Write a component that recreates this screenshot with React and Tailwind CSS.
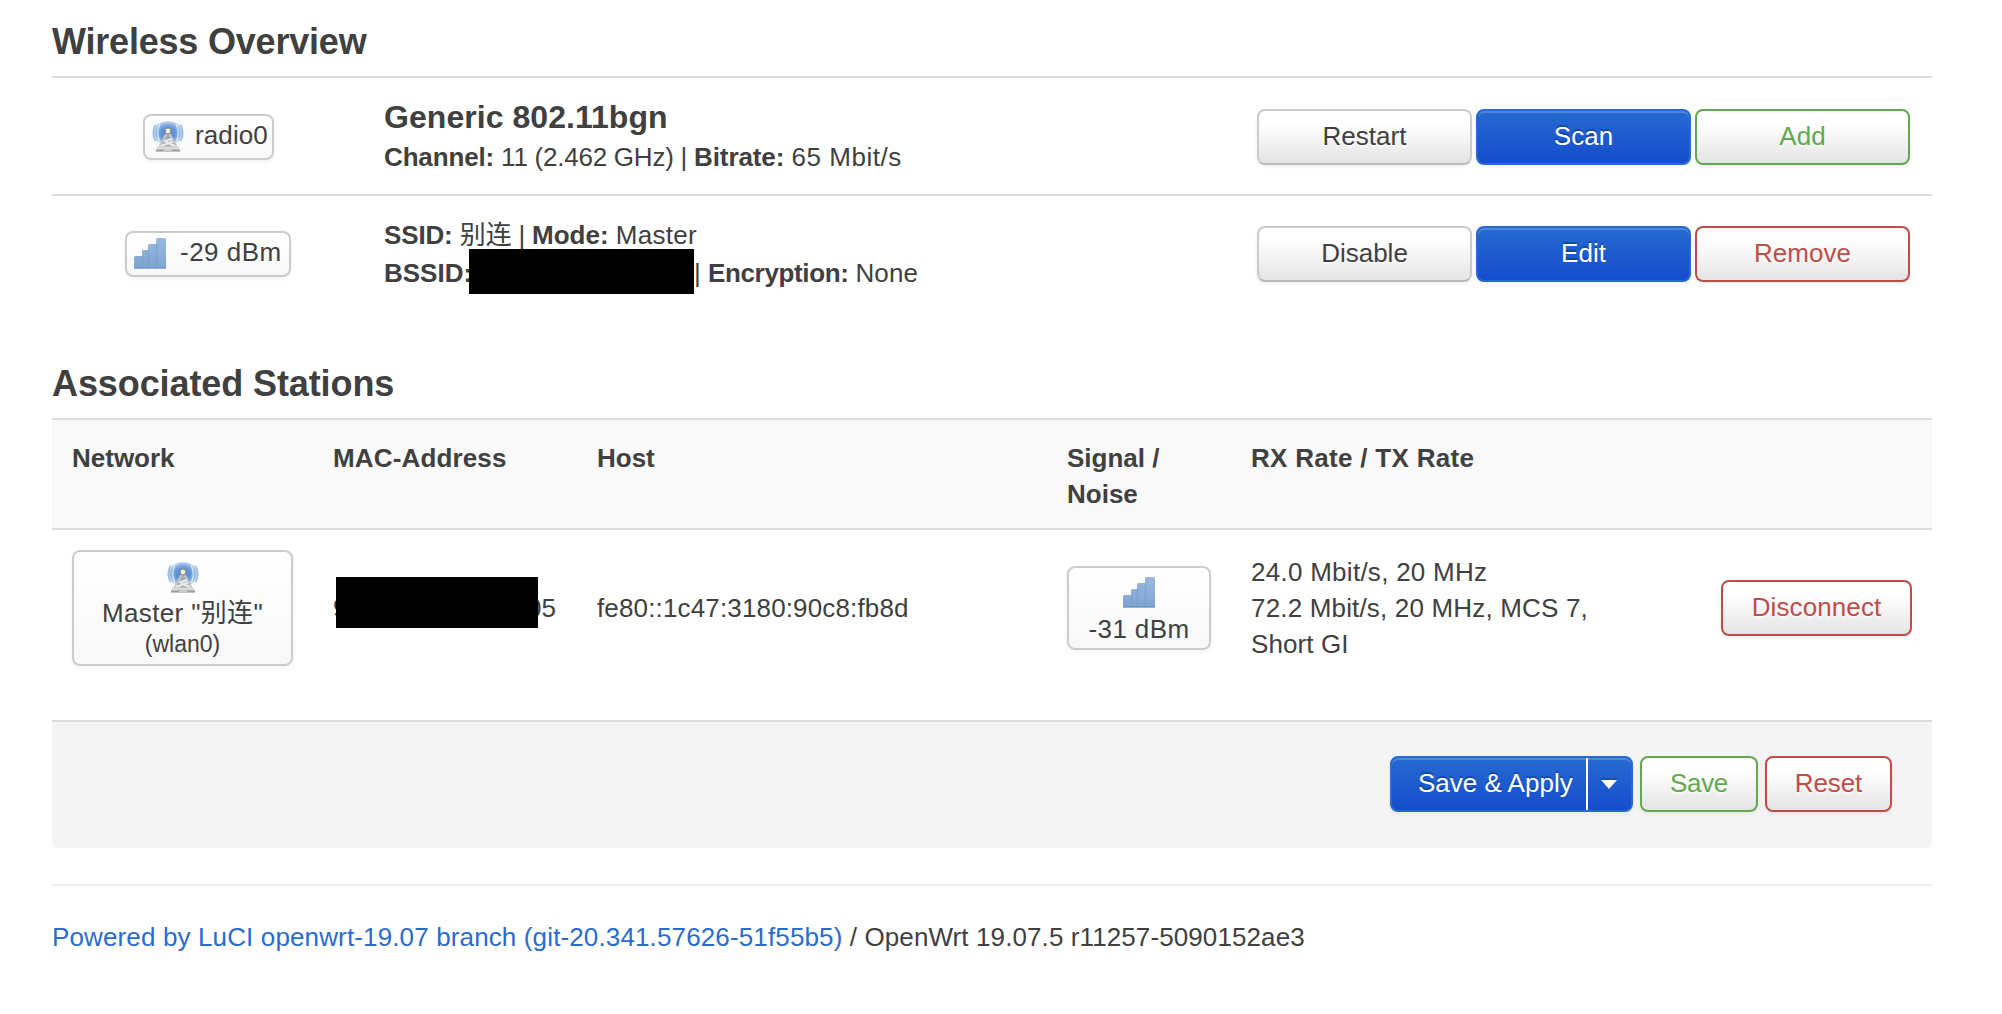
function RadioIcon() {
  return (
    <svg width="32" height="32" viewBox="0 0 32 32" className="block shrink-0">
      <defs>
        <radialGradient id="wave" cx="50%" cy="50%" r="50%">
          <stop offset="0" stopColor="#4c83c9" />
          <stop offset="0.5" stopColor="#6397d8" />
          <stop offset="0.75" stopColor="#8bb2e3" />
          <stop offset="1" stopColor="#c9ddf4" />
        </radialGradient>
      </defs>
      <ellipse cx="16" cy="12" rx="15" ry="12" fill="url(#wave)" />
      <path d="M8 3Q3.500 12 8 21M24 3Q28.500 12 24 21" fill="none" stroke="#dfeaf8" strokeWidth="1.200" />
      <path d="M3.500 3.500Q-1 12 3.500 20.500M28.500 3.500Q33 12 28.500 20.500" fill="none" stroke="#9dbde6" strokeWidth="1.600" />
      <path d="M14.500 12L8 27H24L17.500 12Z" fill="#9fabba" />
      <path d="M14.800 12L7.500 26M17.200 12L24.500 26" stroke="#c4c4c0" strokeWidth="2.200" />
      <path d="M12 20.500L20 18M9 25L21 20.500M23 25L14 21.500" stroke="#ecece8" strokeWidth="2" />
      <circle cx="16" cy="10" r="3" fill="#f1eee2" stroke="#858b92" strokeWidth="1.200" />
      <path d="M5 27H27" stroke="#d9d9d6" strokeWidth="3" />
      <path d="M4 29.500H28" stroke="#9d9d9a" strokeWidth="2.200" />
      <path d="M12 29.300H20" stroke="#cfcfcc" strokeWidth="2" />
    </svg>
  );
}

function SignalIcon() {
  return (
    <svg width="32" height="32" viewBox="0 0 32 32" className="block shrink-0">
      <defs>
        <linearGradient id="bars" x1="0" y1="0" x2="0" y2="1">
          <stop offset="0" stopColor="#9ab8dd" />
          <stop offset="1" stopColor="#7ea4d2" />
        </linearGradient>
      </defs>
      <path d="M0 19.500Q0 18 1.500 18H8V13.500Q8 12 9.500 12H14V7.500Q14 6 15.500 6H22V1.500Q22 0 23.500 0H30.500Q32 0 32 1.500V30.500H0Z" fill="url(#bars)" />
      <path d="M8.500 18V30M14.500 12V30M22.500 6V30" stroke="#6c93c4" strokeWidth="1.500" opacity="0.35" />
      <path d="M0 29.800H32" stroke="#6a92c6" strokeWidth="1.500" opacity="0.8" />
    </svg>
  );
}

const btnBase =
  "flex h-[56px] shrink-0 items-center justify-center rounded-[8px] border-2 pb-[2px] text-[26px] leading-[36px] whitespace-nowrap";
const light =
  "bg-[linear-gradient(#ffffff,#ffffff_25%,#e4e4e4)] [text-shadow:0_2px_2px_rgba(255,255,255,0.75)] shadow-[0_2px_4px_rgba(0,0,0,0.06)]";
const tones = {
  neutral: light + " border-[#cbcbcb] border-b-[#b9b9b9] text-[#404040]",
  green: light + " border-[#61a850] text-[#61a850]",
  red: light + " border-[#be4d48] text-[#be4d48]",
  blue:
    "border-[#266ad0] bg-[linear-gradient(#256ad1,#154dcd)] text-white [text-shadow:0_-2px_0_rgba(0,0,0,0.25)] shadow-[inset_0_2px_0_rgba(255,255,255,0.2),0_2px_4px_rgba(0,0,0,0.06)]",
};

function Button({ tone, className, children }) {
  return <button className={`${btnBase} ${tones[tone]} ${className}`}>{children}</button>;
}

const badge =
  "rounded-[8px] border-2 border-[#cccccc] bg-[linear-gradient(#ffffff,#f8f8f8)] shadow-[0_2px_4px_rgba(0,0,0,0.05)]";

function T({ className = "", children }) {
  return <span className={`inline-block whitespace-pre ${className}`}>{children}</span>;
}

export default function App() {
  return (
    <div className="h-[1014px] overflow-hidden bg-white pt-[24px] pl-[52px] font-['Liberation_Sans','Noto_Sans_CJK_SC',sans-serif] text-[26px] leading-[36px] text-[#404040]">
      <main className="w-[1880px]">
        <section>
          <h3 className="mb-[16px] text-[36px] font-bold tracking-[-0.2px]">Wireless Overview</h3>

          <div className="flex h-[118px] items-center border-t-2 border-[#dddddd] pt-[2px]">
            <div className="flex w-[313px] justify-center">
              <div className={`${badge} flex h-[46px] w-[131px] items-center gap-[11px] pl-[7px]`}>
                <RadioIcon />
                <T className="mb-[4px] tracking-[0.1px]">radio0</T>
              </div>
            </div>
            <div className="flex-1 pl-[19px]">
              <div className="mb-[4px] text-[32px] leading-[36px] font-bold tracking-[0.05px]">Generic 802.11bgn</div>
              <div>
                <T className="font-bold tracking-[-0.15px]">Channel: </T>
                <T className="tracking-[-0.24px]">11 (2.462 GHz) | </T>
                <T className="font-bold tracking-[-0.1px]">Bitrate: </T>
                <T className="tracking-[0.55px]">65 Mbit/s</T>
              </div>
            </div>
            <div className="flex gap-[4px] pr-[22px]">
              <Button tone="neutral" className="w-[215px]">Restart</Button>
              <Button tone="blue" className="w-[215px]">Scan</Button>
              <Button tone="green" className="w-[215px]">Add</Button>
            </div>
          </div>

          <div className="flex h-[118px] items-center border-t-2 border-[#dddddd]">
            <div className="flex w-[313px] justify-center">
              <div className={`${badge} mr-[1px] flex h-[46px] w-[166px] items-center gap-[14px] pl-[7px]`}>
                <SignalIcon />
                <T className="mb-[4px] tracking-[0.5px]">-29 dBm</T>
              </div>
            </div>
            <div className="flex-1 pl-[19px]">
              <div className="h-[38px]">
                <T className="font-bold tracking-[-0.15px]">SSID: </T>
                <T>别连</T>
                <T className="tracking-[-0.3px]"> | </T>
                <T className="font-bold">Mode: </T>
                <T className="tracking-[0.3px]">Master</T>
              </div>
              <div className="flex h-[36px]">
                <T className="w-[85px] font-bold">BSSID:</T>
                <span className="relative -mt-[6px] h-[45px] w-[225px] bg-black" />
                <T>| </T>
                <T className="font-bold tracking-[-0.35px]">Encryption: </T>
                <T className="tracking-[0.1px]">None</T>
              </div>
            </div>
            <div className="flex gap-[4px] pr-[22px]">
              <Button tone="neutral" className="w-[215px]">Disable</Button>
              <Button tone="blue" className="w-[215px]">Edit</Button>
              <Button tone="red" className="w-[215px]">Remove</Button>
            </div>
          </div>
        </section>

        <section className="mt-[54px]">
          <h3 className="mb-[16px] text-[36px] font-bold tracking-[-0.1px]">Associated Stations</h3>

          <div className="grid h-[112px] grid-cols-[261px_264px_470px_184px_1fr] border-y-2 border-[#dddddd] bg-[#f9f9f9] px-[20px] pt-[20px] font-bold">
            <div>Network</div>
            <div className="tracking-[0.15px]">MAC-Address</div>
            <div>Host</div>
            <div>Signal /<br />Noise</div>
            <div className="tracking-[0.3px]">RX Rate / TX Rate</div>
          </div>

          <div className="grid h-[156px] grid-cols-[261px_264px_470px_184px_1fr_auto] items-center px-[20px]">
            <div className={`${badge} flex h-[116px] w-[221px] flex-col items-center pt-[10px]`}>
              <RadioIcon />
              <div className="mt-[1px] h-[35px] tracking-[0.35px]">Master "别连"</div>
              <div className="text-[23px] leading-[28px]">(wlan0)</div>
            </div>
            <div className="relative flex h-[36px] w-[223px] justify-between">
              <span>9</span>
              <span>05</span>
              <span className="absolute top-[-13px] left-[3px] h-[51px] w-[202px] bg-black" />
            </div>
            <div className="tracking-[0.15px]">fe80::1c47:3180:90c8:fb8d</div>
            <div className={`${badge} flex h-[84px] w-[144px] flex-col items-center pt-[9px]`}>
              <SignalIcon />
              <T className="mt-[2px] tracking-[0.4px]">-31 dBm</T>
            </div>
            <div>
              <T className="tracking-[0.27px]">24.0 Mbit/s, 20 MHz</T><br />
              <T className="tracking-[0.17px]">72.2 Mbit/s, 20 MHz, MCS 7,</T><br />
              <T className="tracking-[0.1px]">Short GI</T>
            </div>
            <Button tone="red" className="w-[191px] tracking-[0.1px]">Disconnect</Button>
          </div>
        </section>

        <div className="mt-[34px] flex h-[128px] justify-end rounded-b-[6px] border-t-2 border-[#dddddd] bg-[#f4f4f4] pt-[34px] pr-[40px]">
          <div className={`${tones.blue} mr-[7px] flex h-[56px] w-[243px] rounded-[8px] border-2`}>
            <span className="flex-1 pt-[7px] pl-[26px] whitespace-nowrap">Save &amp; Apply</span>
            <span className="flex w-[45px] items-center border-l-2 border-white pl-[13px]">
              <svg width="16" height="12" viewBox="0 0 16 12">
                <path d="M0 0H16V2H0Z" fill="#1a4dad" />
                <path d="M0 2H16L8 11Z" fill="#fff" />
              </svg>
            </span>
          </div>
          <Button tone="green" className="mr-[7px] w-[118px] tracking-[-0.3px]">Save</Button>
          <Button tone="red" className="w-[127px] tracking-[-0.1px]">Reset</Button>
        </div>

        <footer className="mt-[36px] border-t-2 border-[#eeeeee] pt-[33px]">
          <a className="tracking-[0.135px] text-[#2a6bcf]">Powered by LuCI openwrt-19.07 branch (git-20.341.57626-51f55b5)</a>
          <T className="tracking-[0.1px]"> / OpenWrt 19.07.5 r11257-5090152ae3</T>
        </footer>
      </main>
    </div>
  );
}
